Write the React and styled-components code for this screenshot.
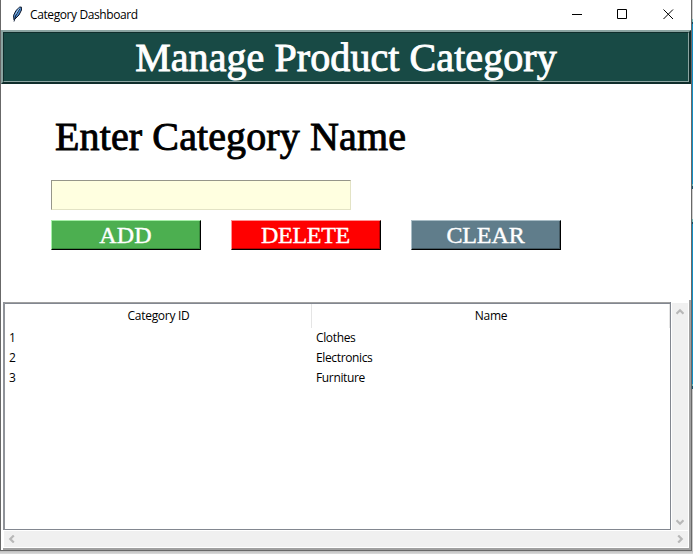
import React from "react";
import styled, { createGlobalStyle } from "styled-components";

const GlobalStyle = createGlobalStyle`
  * { box-sizing: border-box; }
  body { margin: 0; overflow: hidden; background: #d2d2d2; }
`;

const Desktop = styled.div`
  width: 693px;
  height: 554px;
  display: flex;
  align-items: flex-start;
  background: linear-gradient(#bdbdbd, #dcdcdc) 0 551px / 100% 3px no-repeat #d2d2d2;
`;

const Window = styled.main`
  width: 692px;
  height: 551px;
  display: flex;
  flex-direction: column;
  border: solid #686868;
  border-width: 0 1px 1px;
  background: #fff;
  color: #000;
  font: 12px/20px "Open Sans", "Noto Sans", sans-serif;
`;

const Backdrop = styled.div`
  width: 1px;
  height: 551px;
  background: linear-gradient(
    #cfcfcf 19px, #67b5b5 19px 22px, #12506c 22px 24px, #148fc4 24px 184px,
    #67b5b5 184px 186px, #12506c 186px 189px, #cfcfcf 189px 219px,
    #67b5b5 219px 222px, #12506c 222px 224px, #148fc4 224px 384px,
    #67b5b5 384px 386px, #12506c 386px 389px, #c6c6c6 389px
  );
`;

const TitleBar = styled.header`
  height: 30px;
  flex: none;
  display: flex;
  align-items: center;
  padding-left: 9px;
`;

const Feather = styled.svg`
  width: 14px;
  height: 16px;
  margin: -2px 6px 0 0;
`;

const UiText = styled.span`
  font-size: 12px;
  white-space: nowrap;
  letter-spacing: ${(p) => p.$track || 0}px;
`;

const Controls = styled.div`
  display: flex;
  margin-left: auto;
`;

const Control = styled.button`
  width: 46px;
  height: 30px;
  padding: 0 0 2px;
  border: 0;
  background: none;
  display: grid;
  place-items: center;

  svg { width: 11px; height: 11px; display: block; }
`;

const Banner = styled.h1`
  height: 54px;
  flex: none;
  margin: 0;
  padding: 0;
  border: solid;
  border-width: 2px;
  border-color: #8ba4a1 #0f2d2b #0f2d2b #8ba4a1;
  background: #184a45;
  color: #fff;
  display: flex;
`;

const BannerGroove = styled.span`
  flex: 1;
  padding-top: 1px;
  border: 1px solid;
  border-color: #0f2d2b #8ba4a1 #8ba4a1 #0f2d2b;
  display: flex;
  justify-content: center;
  align-items: center;
`;

const SerifText = styled.span`
  font-family: "Liberation Serif", serif;
  font-weight: 400;
  font-size: ${(p) => p.$size}px;
  line-height: 1;
  letter-spacing: ${(p) => p.$track}px;
  white-space: nowrap;
  -webkit-text-stroke: ${(p) => p.$stroke || 0}px currentColor;
`;

const Form = styled.section`
  height: 218px;
  flex: none;
  padding: 33px 0 0 50px;
  display: flex;
  flex-direction: column;
`;

const FieldLabel = styled.label`
  height: 63px;
  padding-left: 4px;
`;

const NameInput = styled.input`
  width: 300px;
  height: 30px;
  padding: 2px;
  border: 1px solid;
  border-color: #96968a #e3e3c5 #e3e3c5 #96968a;
  border-radius: 0;
  outline: 0;
  background: #ffffe0;
  font: 20px "Liberation Serif", serif;
`;

const Actions = styled.div`
  display: flex;
  gap: 30px;
  margin-top: 10px;
`;

const ActionButton = styled.button`
  width: 150px;
  height: 30px;
  padding: 0 1px 1px 0;
  border: solid;
  border-width: 1px;
  border-color: ${(p) => p.$light} #000 #000 ${(p) => p.$light};
  box-shadow: inset -1px -1px ${(p) => p.$dark};
  background: ${(p) => p.$face};
  color: #fff;
  display: flex;
  align-items: center;
  justify-content: center;
`;

const TreeFrame = styled.section`
  width: 688px;
  height: 250px;
  margin: -2px 0 0 2px;
  display: grid;
  grid-template-columns: 668px 1fr;
  grid-template-rows: 230px 1fr;
  border: solid #a0a0a0;
  border-width: 0 2px 2px 0;
  background: #fff;
`;

const Tree = styled.div`
  margin-top: 2px;
  border: 1px solid #828790;
  border-top: 0;
  outline: 0;
  background: linear-gradient(#a0a0a0 1px, #828790 1px 2px, #fff 2px);
  border-left: 2px solid #909399;
  padding-top: 2px;
  display: grid;
  grid-template-columns: 307px 358px;
  grid-template-rows: 24px repeat(3, 20px) 1fr;
`;

const HeadCell = styled.div`
  border-right: 1px solid #e5e5e5;
  padding-left: 1px;
  text-align: center;
  line-height: 24px;
`;

const Cell = styled.div`
  padding-left: 4px;
  line-height: 20px;
`;

const ScrollTrack = styled.div`
  display: flex;
  flex-direction: ${(p) => (p.$vertical ? "column" : "row")};
  justify-content: space-between;
  align-items: center;
  margin: ${(p) => (p.$vertical ? "3px 1px 0" : "1px 1px 1px 1px")};
  grid-column: ${(p) => (p.$vertical ? "2" : "1 / -1")};
  padding: ${(p) => (p.$vertical ? "5px 0 4px" : "0 4px 0 4px")};
  background: #f0f0f0;

  svg { width: 8px; height: 8px; flex: none; }
`;

const Arrow = ({ d }) => (
  <svg viewBox="0 0 8 8"><path d={d} fill="none" stroke="#b8b8b8" strokeWidth="2.2" /></svg>
);

const actions = [
  { label: "ADD", face: "#4caf50", light: "#a5f0a8", dark: "#388a3c", track: 0.2 },
  { label: "DELETE", face: "#ff0000", light: "#ff9292", dark: "#b40000", track: -0.3 },
  { label: "CLEAR", face: "#607d8b", light: "#a9bdc6", dark: "#435861", track: -0.1 },
];

const rows = [["1", "Clothes"], ["2", "Electronics"], ["3", "Furniture"]];

export default function App() {
  return (
    <>
      <GlobalStyle />
      <Desktop>
        <Window>
          <TitleBar>
            <Feather viewBox="0 0 14 16">
              <path d="M4 14 3.5 9.5 6 4.5 9.5 1.2 11.3 1 11.5 4 9 9 6 12Z" fill="#4b87c8" stroke="#10182a" />
              <path d="M9.5 3 6 9 4 15.5" fill="none" stroke="#14223b" />
              <path d="M9 2.5 5.4 8.5" stroke="#a9d0f5" />
            </Feather>
            <UiText $track={-0.4}>Category Dashboard</UiText>
            <Controls>
              <Control aria-label="Minimize">
                <svg viewBox="0 0 11 11"><path d="M1 5.5H11" stroke="#000" /></svg>
              </Control>
              <Control aria-label="Maximize">
                <svg viewBox="0 0 11 11"><path d="M.5 .5h9v9h-9z" fill="none" stroke="#000" /></svg>
              </Control>
              <Control aria-label="Close">
                <svg viewBox="0 0 11 11"><path d="M.5 .5l9.5 9.5M10 .5l-9.5 9.5" stroke="#000" strokeWidth="1" /></svg>
              </Control>
            </Controls>
          </TitleBar>
          <Banner>
            <BannerGroove>
              <SerifText $size={40} $track={0.08} $stroke={0.9}>Manage Product Category</SerifText>
            </BannerGroove>
          </Banner>
          <Form>
            <FieldLabel htmlFor="category">
              <SerifText $size={40} $track={0.12} $stroke={0.9}>Enter Category Name</SerifText>
            </FieldLabel>
            <NameInput id="category" />
            <Actions>
              {actions.map((a) => (
                <ActionButton key={a.label} $face={a.face} $light={a.light} $dark={a.dark}>
                  <SerifText $size={24} $track={a.track} $stroke={0.4}>{a.label}</SerifText>
                </ActionButton>
              ))}
            </Actions>
          </Form>
          <TreeFrame>
            <Tree>
              <HeadCell><UiText $track={-0.3}>Category ID</UiText></HeadCell>
              <HeadCell><UiText $track={-0.3}>Name</UiText></HeadCell>
              {rows.map(([id, name]) => (
                <React.Fragment key={id}>
                  <Cell><UiText>{id}</UiText></Cell>
                  <Cell><UiText $track={-0.36}>{name}</UiText></Cell>
                </React.Fragment>
              ))}
            </Tree>
            <ScrollTrack $vertical>
              <Arrow d="M.5 5.8 4 2.3 7.5 5.8" />
              <Arrow d="M.5 2.2 4 5.7 7.5 2.2" />
            </ScrollTrack>
            <ScrollTrack>
              <Arrow d="M5.8 .5 2.3 4 5.8 7.5" />
              <Arrow d="M2.2 .5 5.7 4 2.2 7.5" />
            </ScrollTrack>
          </TreeFrame>
        </Window>
        <Backdrop />
      </Desktop>
    </>
  );
}
